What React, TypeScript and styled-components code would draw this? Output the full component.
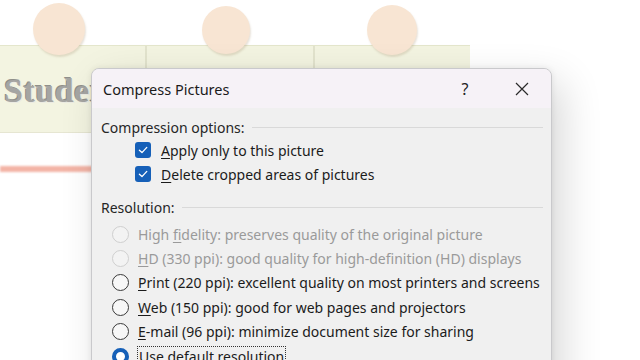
import React from 'react';
import styled, { createGlobalStyle } from 'styled-components';

const GlobalStyle = createGlobalStyle`
  html, body {
    margin: 0;
    padding: 0;
    background: #ffffff;
  }
`;

const Page = styled.div`
  position: relative;
  width: 640px;
  height: 360px;
  overflow: hidden;
  background: #ffffff;
  font-family: 'Noto Sans', 'Open Sans', sans-serif;
`;

/* slide behind the dialog */

const Slide = styled.div`
  display: flex;
  flex-direction: column;
  padding-top: 45px;
`;

const Band = styled.div`
  position: relative;
  display: flex;
  width: 470px;
  height: 86px;
  background: #f3f4e1;
  border-top: 1px solid #e4e6cc;
  border-bottom: 1px solid #e6e6d2;
`;

const BandCell = styled.div<{ $w: number }>`
  width: ${(p) => p.$w}px;
  height: 100%;
  border-right: 2px solid #e2e3cd;
  display: flex;
  align-items: center;
`;

const Dot = styled.div<{ $x: number; $y: number; $r: number }>`
  position: absolute;
  left: ${(p) => p.$x - p.$r}px;
  top: ${(p) => p.$y - p.$r}px;
  width: ${(p) => p.$r * 2}px;
  height: ${(p) => p.$r * 2}px;
  border-radius: 50%;
  background: #f8e5d3;
  box-shadow: 1px 2px 2px rgba(180, 160, 130, 0.3);
`;

const Stamp = styled.span`
  margin-left: 4px;
  margin-top: 4px;
  font-family: 'Liberation Serif', serif;
  font-weight: bold;
  font-size: 34px;
  letter-spacing: 0.5px;
  color: #a5a5a2;
  text-shadow: 1px 1px 0 #ebebe3, -1px -1px 0 #8f8f8a;
`;

const SalmonLine = styled.div`
  margin-top: 33px;
  width: 100px;
  height: 6px;
  background: #f3b4a6;
  filter: blur(1px);
`;

/* dialog */

const Dialog = styled.div`
  position: absolute;
  left: 91px;
  top: 68px;
  width: 459px;
  height: 330px;
  background: #f0f0f0;
  border: 1px solid #c9c9cc;
  border-radius: 8px;
  overflow: hidden;
  box-shadow: 10px 14px 40px rgba(0, 0, 0, 0.16), 0 0 6px rgba(0, 0, 0, 0.08);
  color: #1b1b1b;
`;

const TitleBar = styled.div`
  display: flex;
  align-items: center;
  height: 39px;
  padding-left: 11px;
  background: #f6f2f7;
`;

const Title = styled.div`
  flex: 1;
  font-size: 14.5px;
`;

const TitleButton = styled.div<{ $w: number }>`
  width: ${(p) => p.$w}px;
  height: 39px;
  display: flex;
  align-items: center;
  justify-content: center;
  font-size: 16px;
  color: #222;
`;

const Body = styled.div`
  padding: 4px 8px 0 9px;
  display: flex;
  flex-direction: column;
  font-size: 14px;
`;

const Section = styled.div<{ $top: number }>`
  display: flex;
  align-items: center;
  gap: 7px;
  height: 22px;
  margin-top: ${(p) => p.$top}px;
  color: #262626;
`;

const Rule = styled.div`
  flex: 1;
  height: 1px;
  background: #d9d9d9;
`;

const CheckRow = styled.div`
  display: flex;
  align-items: center;
  gap: 10px;
  height: 24px;
  padding-left: 34px;
`;

const RadioGroup = styled.div`
  display: flex;
  flex-direction: column;
  padding-top: 4px;
`;

const RadioRow = styled.div<{ $disabled?: boolean }>`
  display: flex;
  align-items: center;
  gap: 9px;
  height: 24.4px;
  padding-left: 11px;
  color: ${(p) => (p.$disabled ? '#9a9a9a' : '#1b1b1b')};
`;

const Box = styled.span`
  width: 16px;
  height: 16px;
  border-radius: 3px;
  background: #1660b8;
  display: flex;
  align-items: center;
  justify-content: center;
`;

const Radio = styled.span<{ $disabled?: boolean; $on?: boolean }>`
  box-sizing: border-box;
  width: 17px;
  height: 17px;
  border-radius: 50%;
  flex-shrink: 0;
  border: ${(p) =>
    p.$on ? '4.5px solid #1660b8' : p.$disabled ? '1px solid #cfcfcf' : '1px solid #3a3a3a'};
  background: ${(p) => (p.$on ? '#ffffff' : p.$disabled ? '#f3f3f3' : '#f7f7f7')};
`;

const Focus = styled.span`
  outline: 1px dotted #333;
  outline-offset: 0px;
  padding: 0 1px;
`;

const U = styled.span`
  text-decoration: underline;
  text-underline-offset: 2px;
`;

const Check = () => (
  <svg width="12" height="12" viewBox="0 0 12 12">
    <path d="M2.4 6.2 L5 8.6 L9.8 3.4" fill="none" stroke="#ffffff" strokeWidth="1.3" strokeLinecap="round" strokeLinejoin="round" />
  </svg>
);

const Close = () => (
  <svg width="14" height="14" viewBox="0 0 14 14">
    <path d="M1 1 L13 13 M13 1 L1 13" stroke="#2a2a2a" strokeWidth="1.2" />
  </svg>
);

const radios = [
  { key: 'hf', pre: 'High ', u: 'f', rest: 'idelity: preserves quality of the original picture', disabled: true },
  { key: 'hd', pre: '', u: 'H', rest: 'D (330 ppi): good quality for high-definition (HD) displays', disabled: true },
  { key: 'pr', pre: '', u: 'P', rest: 'rint (220 ppi): excellent quality on most printers and screens' },
  { key: 'wb', pre: '', u: 'W', rest: 'eb (150 ppi): good for web pages and projectors' },
  { key: 'em', pre: '', u: 'E', rest: '-mail (96 ppi): minimize document size for sharing' },
];

export default function App() {
  return (
    <>
      <GlobalStyle />
      <Page>
        <Slide>
          <Band>
            <BandCell $w={145}>
              <Stamp>Student</Stamp>
            </BandCell>
            <BandCell $w={166} />
            <Dot $x={59} $y={-17} $r={26} />
            <Dot $x={226} $y={-16} $r={24} />
            <Dot $x={392} $y={-16} $r={25} />
          </Band>
          <SalmonLine />
        </Slide>

        <Dialog>
          <TitleBar>
            <Title>Compress Pictures</Title>
            <TitleButton $w={56}>?</TitleButton>
            <TitleButton $w={58}>
              <Close />
            </TitleButton>
          </TitleBar>
          <Body>
            <Section $top={4}>
              Compression options:
              <Rule />
            </Section>
            <CheckRow>
              <Box>
                <Check />
              </Box>
              <span>
                <U>A</U>pply only to this picture
              </span>
            </CheckRow>
            <CheckRow>
              <Box>
                <Check />
              </Box>
              <span>
                <U>D</U>elete cropped areas of pictures
              </span>
            </CheckRow>
            <Section $top={10}>
              Resolution:
              <Rule />
            </Section>
            <RadioGroup>
              {radios.map((r) => (
                <RadioRow key={r.key} $disabled={r.disabled}>
                  <Radio $disabled={r.disabled} />
                  <span>
                    {r.pre}
                    <U>{r.u}</U>
                    {r.rest}
                  </span>
                </RadioRow>
              ))}
              <RadioRow>
                <Radio $on />
                <Focus>
                  <U>U</U>se default resolution
                </Focus>
              </RadioRow>
            </RadioGroup>
          </Body>
        </Dialog>
      </Page>
    </>
  );
}
